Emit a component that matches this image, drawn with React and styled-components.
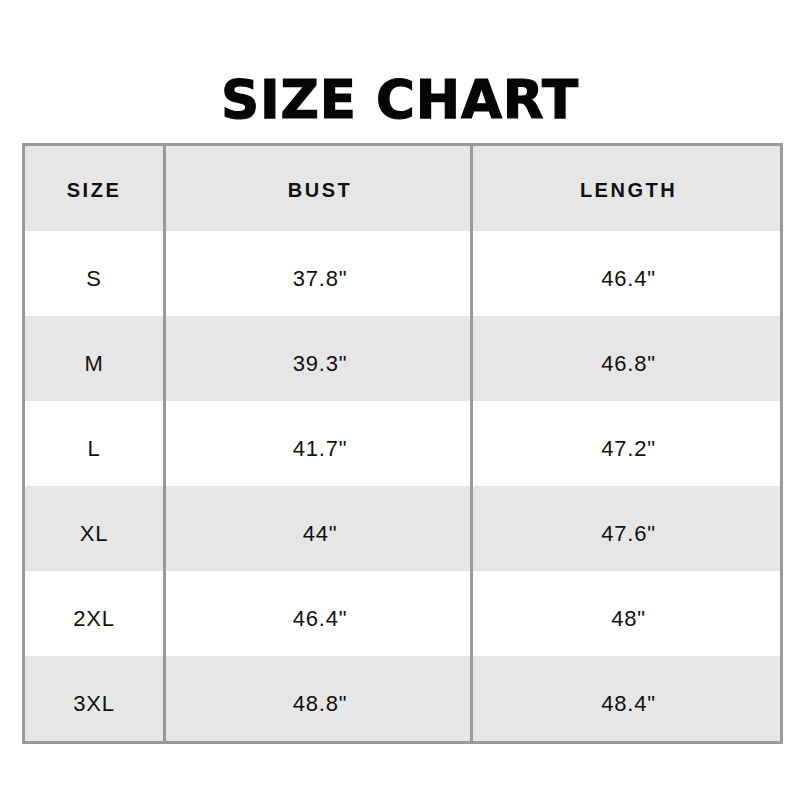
import React from "react";
import styled, { createGlobalStyle } from "styled-components";

const GlobalStyle = createGlobalStyle`
  html, body {
    margin: 0;
    padding: 0;
    background: #ffffff;
  }
`;

const Page = styled.div`
  width: 800px;
  height: 800px;
  padding-top: 73px;
  box-sizing: border-box;
  display: flex;
  flex-direction: column;
  align-items: center;
  background: #ffffff;
`;

const Title = styled.h1`
  margin: 0 0 17px 0;
  font-family: "DejaVu Sans", sans-serif;
  font-weight: 700;
  font-size: 53px;
  line-height: 53px;
  letter-spacing: 0.8px;
  color: #050505;
  -webkit-text-stroke: 1.2px #050505;
`;

const Table = styled.div`
  display: grid;
  grid-template-columns: 138px 307px 310px;
  grid-auto-rows: 85px;
  border: 3px solid #9a9a9a;
  margin-left: 5px;
`;

const Cell = styled.div`
  display: flex;
  align-items: center;
  justify-content: center;
  padding-top: ${(p) => (p.$head ? "4px" : "10px")};
  padding-left: ${(p) => (p.$first ? "0" : "4px")};
  box-sizing: border-box;
  background: ${(p) => (p.$shade ? "#e6e6e6" : "#ffffff")};
  border-left: ${(p) => (p.$first ? "none" : "3px solid #9a9a9a")};
  font-family: "Liberation Sans", Arial, sans-serif;
  font-size: ${(p) => (p.$head ? "20px" : "22px")};
  font-weight: ${(p) => (p.$head ? 700 : 400)};
  letter-spacing: ${(p) => (p.$head ? "2.5px" : "0.8px")};
  color: #111111;
`;

const headers = ["SIZE", "BUST", "LENGTH"];

const rows = [
  ["S", '37.8"', '46.4"'],
  ["M", '39.3"', '46.8"'],
  ["L", '41.7"', '47.2"'],
  ["XL", '44"', '47.6"'],
  ["2XL", '46.4"', '48"'],
  ["3XL", '48.8"', '48.4"'],
];

const App = () => (
  <>
    <GlobalStyle />
    <Page>
      <Title>SIZE CHART</Title>
      <Table>
        {headers.map((h, i) => (
          <Cell key={h} $head $shade $first={i === 0}>
            {h}
          </Cell>
        ))}
        {rows.map((row, r) =>
          row.map((value, i) => (
            <Cell key={`${r}-${i}`} $shade={r % 2 === 1} $first={i === 0}>
              {value}
            </Cell>
          ))
        )}
      </Table>
    </Page>
  </>
);

export default App;
